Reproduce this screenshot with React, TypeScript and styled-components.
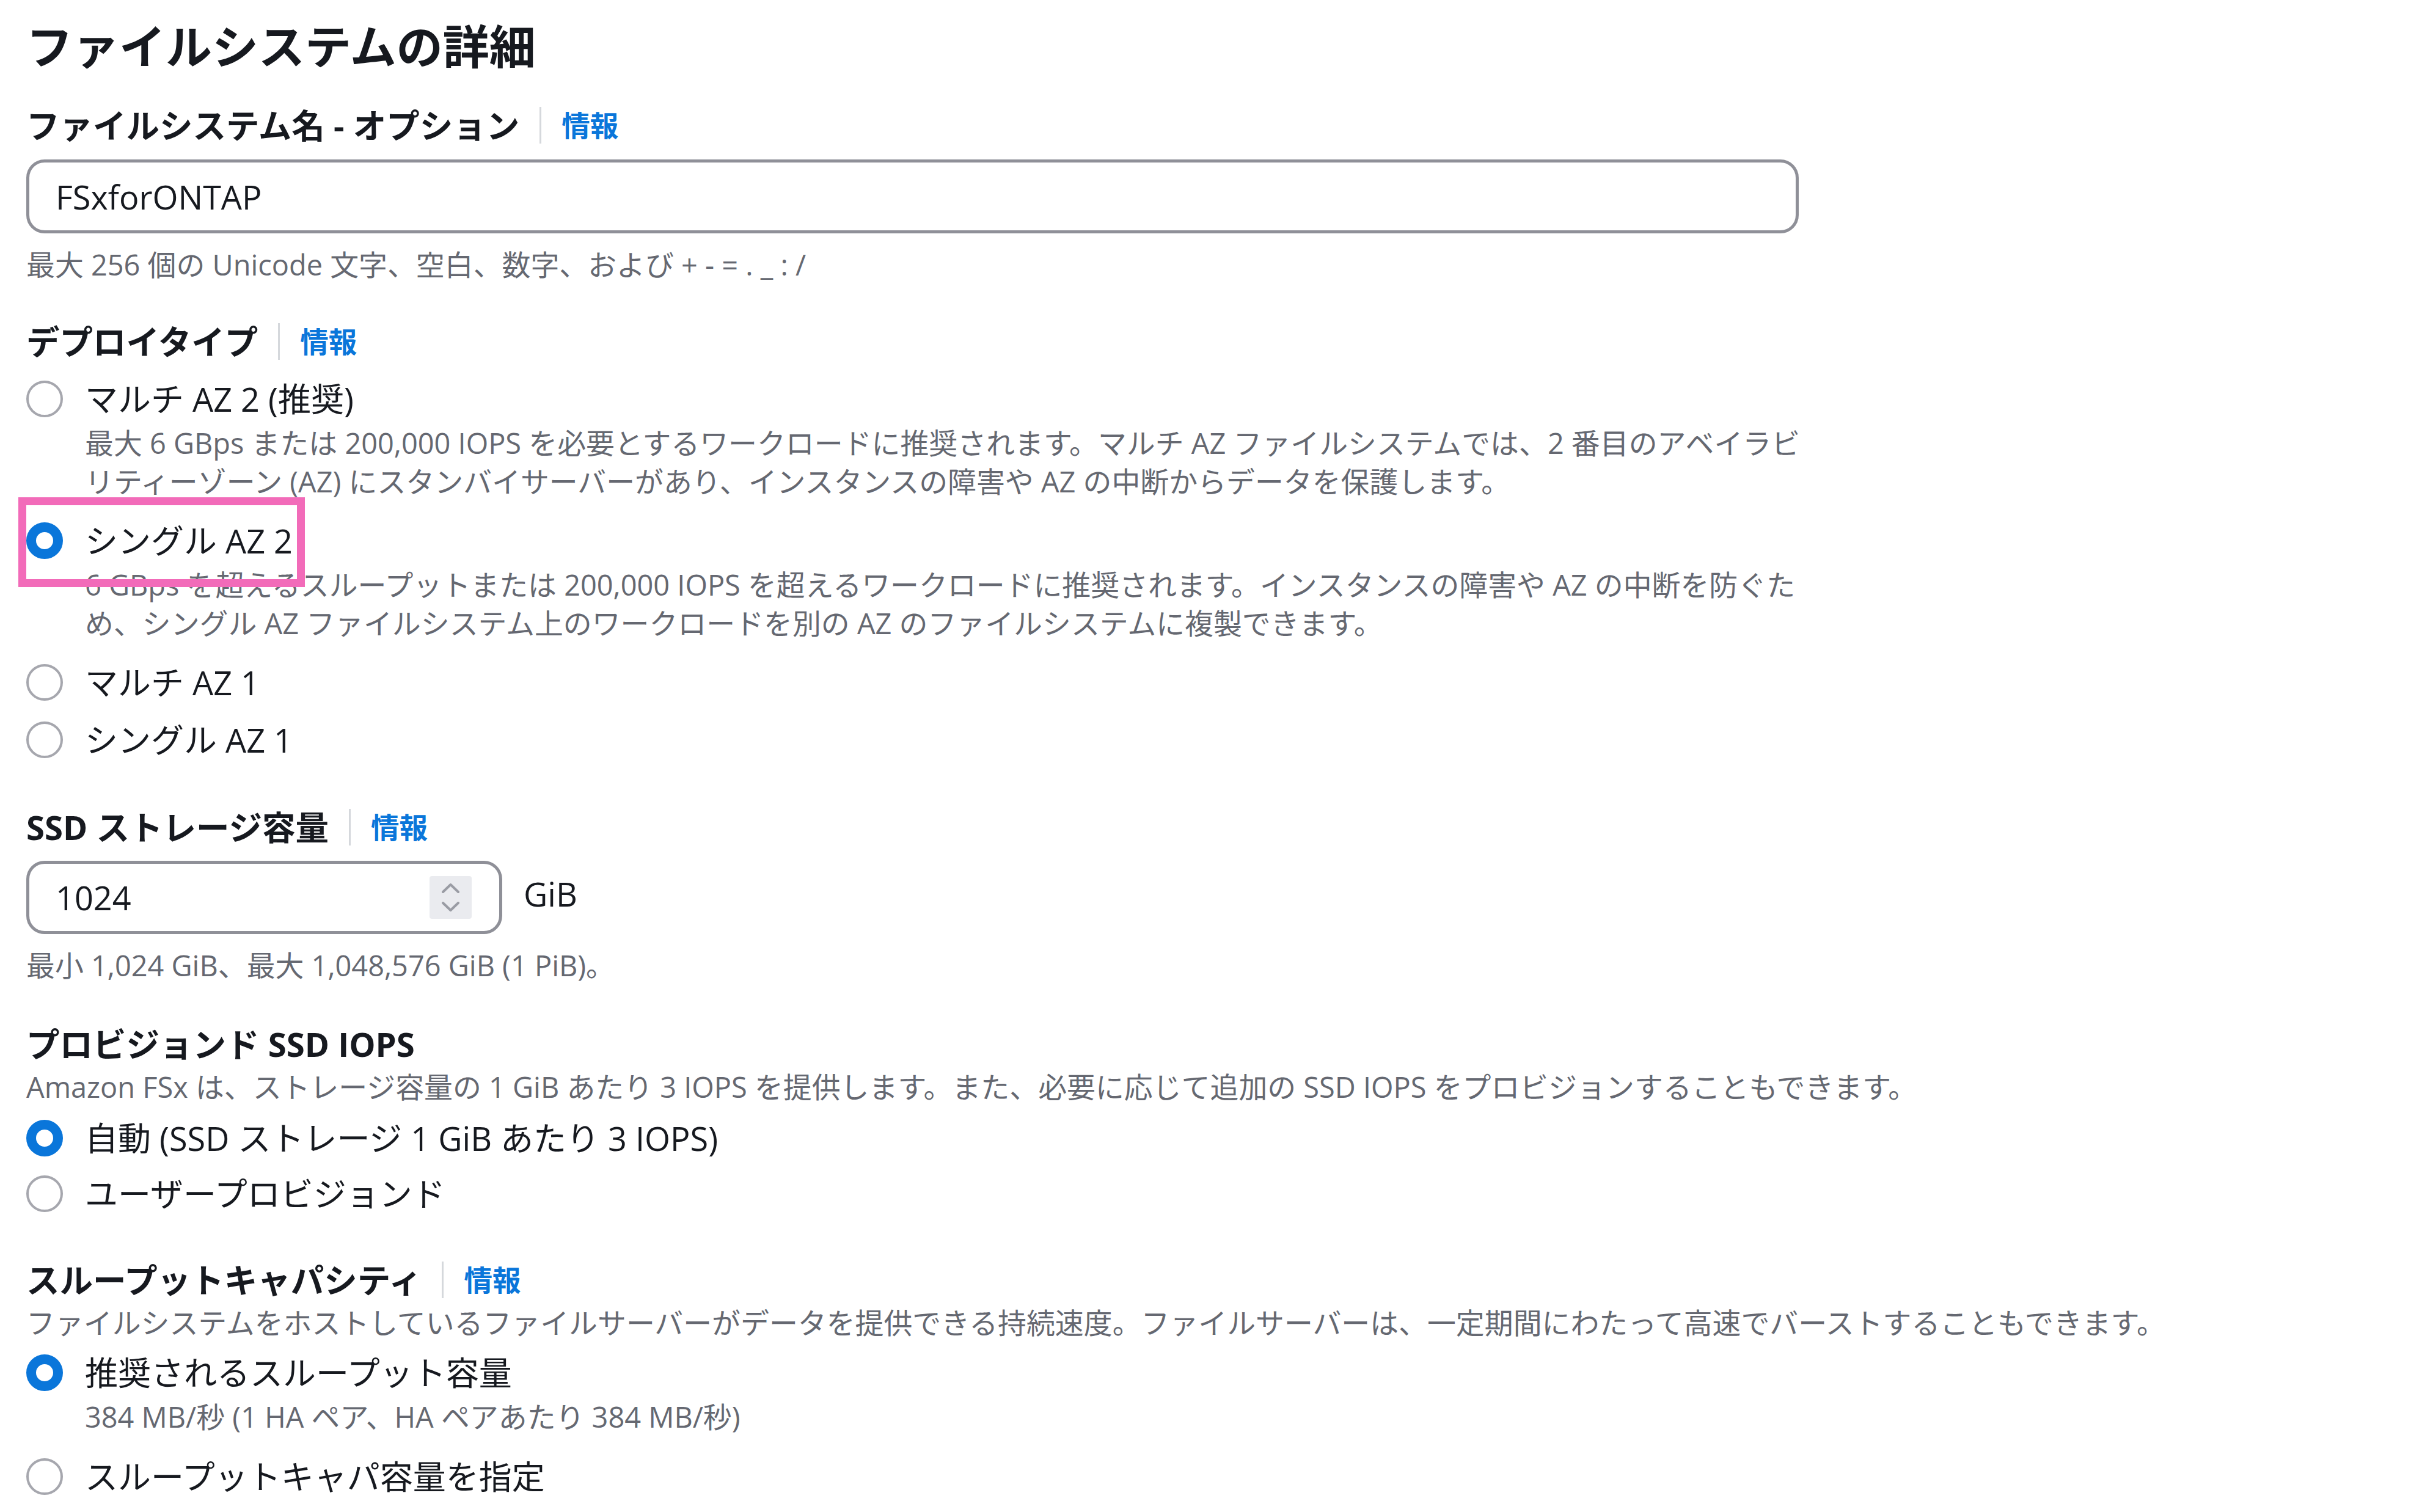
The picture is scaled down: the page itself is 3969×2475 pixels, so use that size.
import React from "react";
import styled, { createGlobalStyle } from "styled-components";

const BLUE = "#0a76da";
const TEXT = "#16191f";
const SECONDARY = "#656871";
const BORDER = "#8f9098";

const GlobalStyle = createGlobalStyle`
  html, body {
    margin: 0;
    padding: 0;
    background: #ffffff;
    overflow: hidden;
  }
  body {
    font-family: "Open Sans", "Noto Sans CJK JP", sans-serif;
    color: ${TEXT};
  }
`;

const Page = styled.main`
  padding: 26px 0 0 43px;
  display: flex;
  flex-direction: column;
`;

const Title = styled.h2`
  margin: 0;
  height: 100px;
  font-size: 76px;
  line-height: 100px;
  font-weight: 700;
  color: ${TEXT};
`;

const Section = styled.section<{ $top: number }>`
  margin-top: ${(p) => p.$top}px;
  display: flex;
  flex-direction: column;
`;

const LabelRow = styled.div`
  display: flex;
  align-items: center;
  gap: 33px;
  height: 70px;
`;

const Label = styled.span`
  font-size: 54.5px;
  line-height: 70px;
  font-weight: 700;
  color: ${TEXT};
  white-space: nowrap;
`;

const Divider = styled.span`
  width: 3px;
  height: 60px;
  background: #d5d8dc;
`;

const InfoLink = styled.a`
  font-size: 46.5px;
  line-height: 70px;
  font-weight: 700;
  color: ${BLUE};
  text-decoration: none;
`;

const Hint = styled.div<{ $top?: number }>`
  margin-top: ${(p) => p.$top ?? 0}px;
  height: 63px;
  font-size: 46.9px;
  line-height: 63px;
  color: ${SECONDARY};
  white-space: nowrap;
`;

const TextInput = styled.div`
  margin-top: 21px;
  box-sizing: border-box;
  width: 2901px;
  height: 121px;
  border: 5px solid ${BORDER};
  border-radius: 30px;
  padding-left: 43px;
  display: flex;
  align-items: center;
  font-size: 54px;
  color: ${TEXT};
`;

const NumberRow = styled.div`
  margin-top: 20px;
  display: flex;
  align-items: center;
  gap: 35px;
`;

const NumberBox = styled.div`
  box-sizing: border-box;
  width: 779px;
  height: 120px;
  border: 5px solid ${BORDER};
  border-radius: 30px;
  padding: 0 45px 0 43px;
  display: flex;
  align-items: center;
  justify-content: space-between;
  font-size: 54px;
  color: ${TEXT};
`;

const Spinner = styled.span`
  width: 69px;
  height: 70px;
  border-radius: 4px;
  background: #eaebef;
  display: flex;
`;

const Unit = styled.span`
  font-size: 54px;
  color: ${TEXT};
  margin-top: -12px;
`;

const RadioGroup = styled.div<{ $top: number; $gap: number }>`
  margin-top: ${(p) => p.$top}px;
  display: flex;
  flex-direction: column;
  gap: ${(p) => p.$gap}px;
`;

const RadioItem = styled.div`
  position: relative;
  display: flex;
  flex-direction: column;
`;

const RadioRow = styled.label`
  display: flex;
  align-items: center;
  gap: 36px;
  height: 76px;
`;

const RadioCircle = styled.span<{ $checked: boolean }>`
  box-sizing: border-box;
  flex: 0 0 auto;
  width: 60px;
  height: 60px;
  border-radius: 50%;
  background: #ffffff;
  border: ${(p) => (p.$checked ? `16px solid ${BLUE}` : "4px solid #a6a7ae")};
`;

const RadioLabel = styled.span`
  font-size: 54px;
  line-height: 76px;
  color: ${TEXT};
  white-space: nowrap;
`;

const RadioDesc = styled.div`
  margin: 3px 0 9px 96px;
  font-size: 46.9px;
  line-height: 63px;
  color: ${SECONDARY};
`;

const DescLine = styled.span`
  display: block;
  height: 63px;
  white-space: nowrap;
`;

const Highlight = styled.span`
  position: absolute;
  left: -13px;
  top: -33px;
  width: 469px;
  height: 147px;
  box-sizing: border-box;
  border: 13px solid #f26bb9;
  pointer-events: none;
  z-index: 2;
`;

type RadioOption = {
  label: string;
  checked?: boolean;
  desc?: string[];
  highlight?: boolean;
};

const Radios = ({ options, top, gap }: { options: RadioOption[]; top: number; gap: number }) => (
  <RadioGroup $top={top} $gap={gap}>
    {options.map((o) => (
      <RadioItem key={o.label}>
        <RadioRow>
          <RadioCircle $checked={!!o.checked} />
          <RadioLabel>{o.label}</RadioLabel>
        </RadioRow>
        {o.desc && (
          <RadioDesc>
            {o.desc.map((line) => (
              <DescLine key={line}>{line}</DescLine>
            ))}
          </RadioDesc>
        )}
        {o.highlight && <Highlight />}
      </RadioItem>
    ))}
  </RadioGroup>
);

const FieldLabel = ({ text, info = true }: { text: string; info?: boolean }) => (
  <LabelRow>
    <Label>{text}</Label>
    {info && (
      <>
        <Divider />
        <InfoLink href="#">情報</InfoLink>
      </>
    )}
  </LabelRow>
);

const SpinnerIcon = () => (
  <svg width="69" height="70" viewBox="0 0 69 70" fill="none">
    <path d="M22 26 L34.5 14 L47 26" stroke="#9a9ca4" strokeWidth="4" strokeLinecap="round" strokeLinejoin="round" />
    <path d="M22 44 L34.5 56 L47 44" stroke="#9a9ca4" strokeWidth="4" strokeLinecap="round" strokeLinejoin="round" />
  </svg>
);

export default function App() {
  return (
    <>
      <GlobalStyle />
      <Page>
        <Title>ファイルシステムの詳細</Title>

        <Section $top={44}>
          <FieldLabel text="ファイルシステム名 - オプション" />
          <TextInput>FSxforONTAP</TextInput>
          <Hint $top={20}>最大 256 個の Unicode 文字、空白、数字、および + - = . _ : /</Hint>
        </Section>

        <Section $top={59}>
          <FieldLabel text="デプロイタイプ" />
          <Radios
            top={21}
            gap={18}
            options={[
              {
                label: "マルチ AZ 2 (推奨)",
                desc: [
                  "最大 6 GBps または 200,000 IOPS を必要とするワークロードに推奨されます。マルチ AZ ファイルシステムでは、2 番目のアベイラビ",
                  "リティーゾーン (AZ) にスタンバイサーバーがあり、インスタンスの障害や AZ の中断からデータを保護します。",
                ],
              },
              {
                label: "シングル AZ 2",
                checked: true,
                highlight: true,
                desc: [
                  "6 GBps を超えるスループットまたは 200,000 IOPS を超えるワークロードに推奨されます。インスタンスの障害や AZ の中断を防ぐた",
                  "め、シングル AZ ファイルシステム上のワークロードを別の AZ のファイルシステムに複製できます。",
                ],
              },
              { label: "マルチ AZ 1" },
              { label: "シングル AZ 1" },
            ]}
          />
        </Section>

        <Section $top={70}>
          <FieldLabel text="SSD ストレージ容量" />
          <NumberRow>
            <NumberBox>
              <span>1024</span>
              <Spinner>
                <SpinnerIcon />
              </Spinner>
            </NumberBox>
            <Unit>GiB</Unit>
          </NumberRow>
          <Hint $top={20}>最小 1,024 GiB、最大 1,048,576 GiB (1 PiB)。</Hint>
        </Section>

        <Section $top={62}>
          <FieldLabel text="プロビジョンド SSD IOPS" info={false} />
          <Hint $top={4}>
            Amazon FSx は、ストレージ容量の 1 GiB あたり 3 IOPS を提供します。また、必要に応じて追加の SSD IOPS をプロビジョンすることもできます。
          </Hint>
          <Radios
            top={14}
            gap={15}
            options={[
              { label: "自動 (SSD ストレージ 1 GiB あたり 3 IOPS)", checked: true },
              { label: "ユーザープロビジョンド" },
            ]}
          />
        </Section>

        <Section $top={68}>
          <FieldLabel text="スループットキャパシティ" />
          <Hint $top={4}>
            ファイルシステムをホストしているファイルサーバーがデータを提供できる持続速度。ファイルサーバーは、一定期間にわたって高速でバーストすることもできます。
          </Hint>
          <Radios
            top={12}
            gap={19}
            options={[
              {
                label: "推奨されるスループット容量",
                checked: true,
                desc: ["384 MB/秒 (1 HA ペア、HA ペアあたり 384 MB/秒)"],
              },
              { label: "スループットキャパ容量を指定" },
            ]}
          />
        </Section>
      </Page>
    </>
  );
}
